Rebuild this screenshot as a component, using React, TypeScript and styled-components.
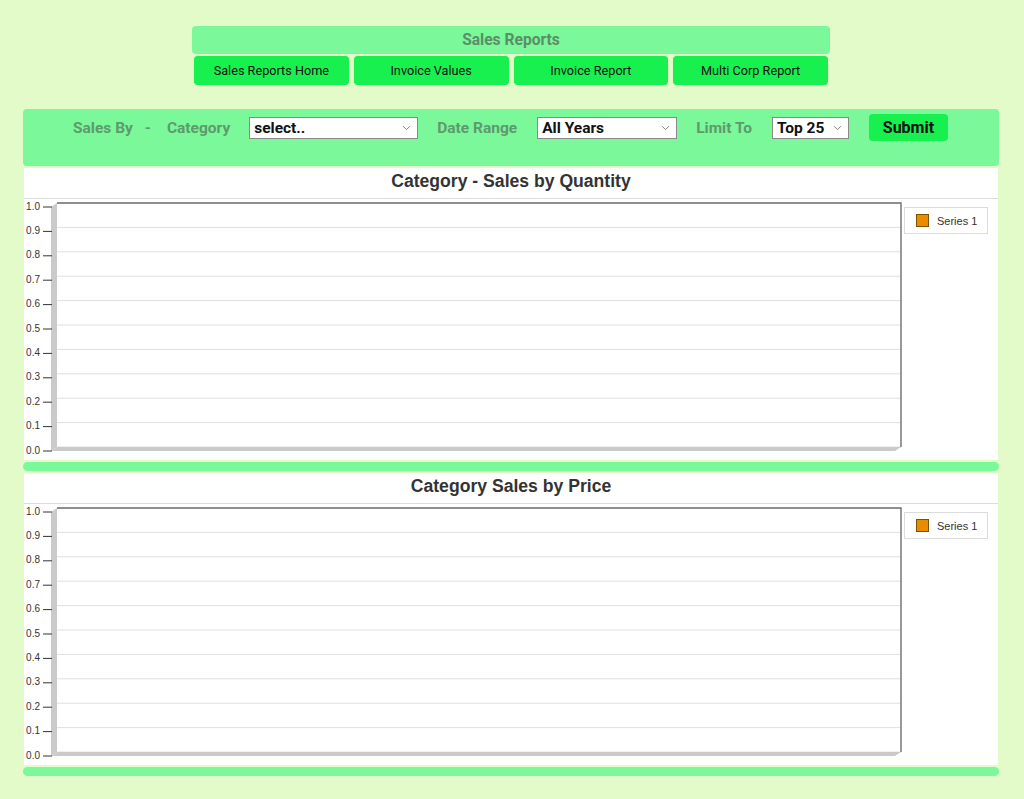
import React from 'react';
import styled, { createGlobalStyle } from 'styled-components';
import { ChevronDown } from 'lucide-react';

const GlobalStyle = createGlobalStyle`
  html, body {
    margin: 0;
    padding: 0;
    background: #e2fbc8;
  }
  body {
    font-family: Roboto, "Liberation Sans", Arial, sans-serif;
  }
`;

const Page = styled.div`
  padding: 26px 25px 20px 23px;
  min-height: 799px;
  box-sizing: border-box;
`;

const Header = styled.div`
  width: 638px;
  margin: 0 auto;
  display: flex;
  flex-direction: column;
  gap: 2px;
`;

const Title = styled.div`
  height: 28px;
  background: #7af89a;
  border-radius: 4px;
  display: flex;
  align-items: center;
  justify-content: center;
  font-weight: 700;
  font-size: 15.6px;
  color: #5b8e68;
`;

const Nav = styled.div`
  display: grid;
  grid-template-columns: repeat(4, 1fr);
  gap: 5px;
  padding: 0 2px;
`;

const NavButton = styled.button`
  height: 29px;
  border: none;
  border-radius: 4px;
  background: #17f04f;
  font-family: Roboto, "Liberation Sans", Arial, sans-serif;
  font-size: 12.7px;
  color: #111;
  cursor: pointer;
  box-shadow: 0 0 1px rgba(0, 0, 0, 0.15);
`;

const FilterPanel = styled.div`
  margin-top: 24px;
  height: 57px;
  box-sizing: border-box;
  background: #7af89a;
  border-radius: 4px;
  padding: 5px 0 0 50px;
`;

const FilterRow = styled.div`
  display: flex;
  align-items: center;
  height: 27px;
`;

const Label = styled.span<{ $gap: number }>`
  font-size: 15.5px;
  font-weight: 700;
  color: #5e9a6c;
  margin-right: ${(p) => p.$gap}px;
`;

const SelectBox = styled.div<{ $w: number; $gap: number }>`
  position: relative;
  width: ${(p) => p.$w}px;
  margin-right: ${(p) => p.$gap}px;
`;

const Select = styled.select`
  appearance: none;
  width: 100%;
  height: 22px;
  box-sizing: border-box;
  border: 1px solid #8a8a8a;
  border-radius: 0;
  background: #fff;
  padding: 0 20px 0 4px;
  font-family: Roboto, "Liberation Sans", Arial, sans-serif;
  font-size: 15.5px;
  font-weight: 700;
  color: #111;
`;

const Chevron = styled.span`
  position: absolute;
  right: 5px;
  top: 50%;
  transform: translateY(-50%);
  display: inline-flex;
  color: #666;
  pointer-events: none;
`;

const Submit = styled.button`
  width: 79px;
  height: 27px;
  border: none;
  border-radius: 4px;
  background: #17f04f;
  font-family: Roboto, "Liberation Sans", Arial, sans-serif;
  font-size: 16px;
  font-weight: 700;
  color: #111;
`;

const ChartPanel = styled.div`
  margin: 2px 1px 0;
  background: #fff;
`;

const ChartTitle = styled.div`
  height: 31px;
  padding-bottom: 4px;
  border-bottom: 1px solid #dcdcdc;
  box-sizing: border-box;
  display: flex;
  align-items: center;
  justify-content: center;
  font-family: "Liberation Sans", Arial, sans-serif;
  font-size: 17.6px;
  font-weight: 700;
  color: #333;
`;

const ChartBody = styled.div`
  display: flex;
  align-items: flex-start;
  height: 261px;
`;

const Legend = styled.div`
  margin: 8px 0 0 1px;
  width: 84px;
  height: 27px;
  box-sizing: border-box;
  border: 1px solid #dcdcdc;
  display: flex;
  align-items: center;
  gap: 8px;
  padding-left: 11px;
  font-family: "Liberation Sans", Arial, sans-serif;
  font-size: 11px;
  color: #333;
`;

const Swatch = styled.span`
  width: 11px;
  height: 11px;
  background: #ea8c00;
  border: 1px solid #7a5200;
`;

const Divider = styled.div`
  margin-top: 2px;
  height: 9px;
  background: #7af89a;
  border-radius: 5px;
`;

const ticks = Array.from({ length: 11 }, (_, i) => i);
const STEP = 24.4;

function Plot() {
  return (
    <svg width={879} height={261}>
      {ticks.map((i) => (
        <line key={'g' + i} x1={33} x2={877} y1={4 + i * STEP} y2={4 + i * STEP} stroke="#e0e0e0" strokeWidth={1} />
      ))}
      <polygon points="27,8 33,4 33,248 27,252" fill="#cacaca" />
      <polygon points="27,252 33,248 877,248 871,252" fill="#cacaca" />
      <polyline points="33,4 877,4 877,248" fill="none" stroke="#6e6e6e" strokeWidth={1.4} />
      {ticks.map((i) => (
        <g key={'t' + i}>
          <line x1={19} x2={28} y1={8 + i * STEP} y2={8 + i * STEP} stroke="#333" strokeWidth={1} />
          <text
            x={16}
            y={8 + i * STEP}
            textAnchor="end"
            dominantBaseline="middle"
            fontSize={10}
            fontFamily='"Liberation Sans", Arial, sans-serif'
            fill="#333"
          >
            {((10 - i) / 10).toFixed(1)}
          </text>
        </g>
      ))}
    </svg>
  );
}

function Chart({ title }: { title: string }) {
  return (
    <>
      <ChartPanel>
        <ChartTitle>{title}</ChartTitle>
        <ChartBody>
          <Plot />
          <Legend>
            <Swatch />
            Series 1
          </Legend>
        </ChartBody>
      </ChartPanel>
      <Divider />
    </>
  );
}

function Dropdown({ value, width, gap }: { value: string; width: number; gap: number }) {
  return (
    <SelectBox $w={width} $gap={gap}>
      <Select defaultValue={value}>
        <option>{value}</option>
      </Select>
      <Chevron>
        <ChevronDown size={13} strokeWidth={1.5} />
      </Chevron>
    </SelectBox>
  );
}

export default function App() {
  return (
    <>
      <GlobalStyle />
      <Page>
        <Header>
          <Title>Sales Reports</Title>
          <Nav>
            <NavButton>Sales Reports Home</NavButton>
            <NavButton>Invoice Values</NavButton>
            <NavButton>Invoice Report</NavButton>
            <NavButton>Multi Corp Report</NavButton>
          </Nav>
        </Header>
        <FilterPanel>
          <FilterRow>
            <Label $gap={12}>Sales By</Label>
            <Label $gap={16}>-</Label>
            <Label $gap={19}>Category</Label>
            <Dropdown value="select.." width={169} gap={19} />
            <Label $gap={20}>Date Range</Label>
            <Dropdown value="All Years" width={140} gap={19} />
            <Label $gap={20}>Limit To</Label>
            <Dropdown value="Top 25" width={77} gap={20} />
            <Submit>Submit</Submit>
          </FilterRow>
        </FilterPanel>
        <Chart title="Category - Sales by Quantity" />
        <Chart title="Category Sales by Price" />
      </Page>
    </>
  );
}
